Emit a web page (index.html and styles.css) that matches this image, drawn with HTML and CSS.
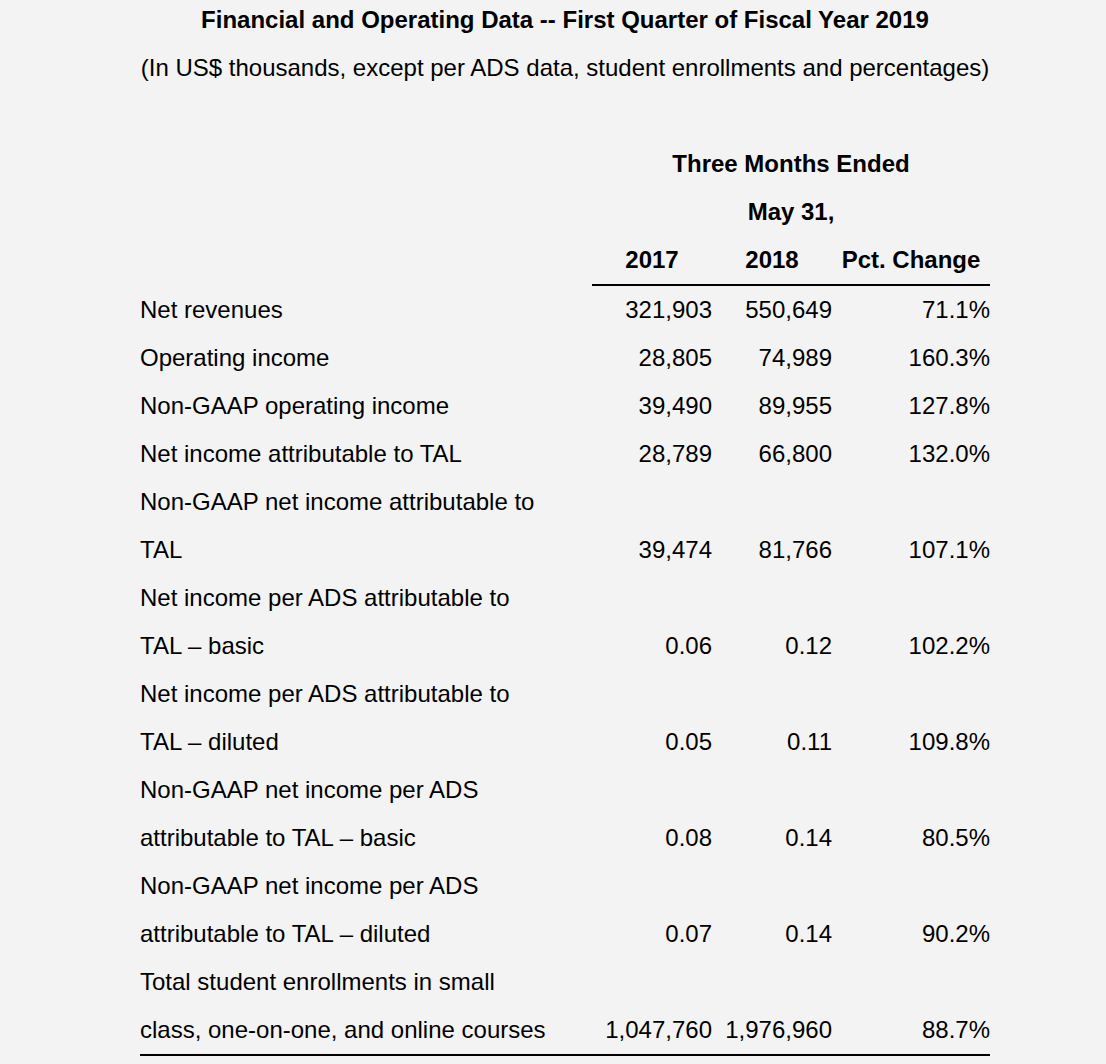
FILE: index.html
```html
<!DOCTYPE html>
<html lang="en">
<head>
<meta charset="utf-8">
<title>Financial and Operating Data</title>
<link rel="stylesheet" href="styles.css">
</head>
<body>
<div class="page">
  <h1 class="title">Financial and Operating Data -- First Quarter of Fiscal Year 2019</h1>
  <p class="subtitle">(In US$ thousands, except per ADS data, student enrollments and percentages)</p>
  <table class="data">
    <colgroup>
      <col class="c-label">
      <col class="c-num">
      <col class="c-num">
      <col class="c-pct">
    </colgroup>
    <thead>
      <tr><th></th><th colspan="3" class="hc">Three Months Ended</th></tr>
      <tr><th></th><th colspan="3" class="hc">May 31,</th></tr>
      <tr class="years"><th></th><th class="hc">2017</th><th class="hc">2018</th><th class="hc">Pct. Change</th></tr>
    </thead>
    <tbody>
      <tr><td class="lbl">Net revenues</td><td class="num">321,903</td><td class="num">550,649</td><td class="num">71.1%</td></tr>
      <tr><td class="lbl">Operating income</td><td class="num">28,805</td><td class="num">74,989</td><td class="num">160.3%</td></tr>
      <tr><td class="lbl">Non-GAAP operating income</td><td class="num">39,490</td><td class="num">89,955</td><td class="num">127.8%</td></tr>
      <tr><td class="lbl">Net income attributable to TAL</td><td class="num">28,789</td><td class="num">66,800</td><td class="num">132.0%</td></tr>
      <tr><td class="lbl">Non-GAAP net income attributable to TAL</td><td class="num">39,474</td><td class="num">81,766</td><td class="num">107.1%</td></tr>
      <tr><td class="lbl">Net income per ADS attributable to TAL – basic</td><td class="num">0.06</td><td class="num">0.12</td><td class="num">102.2%</td></tr>
      <tr><td class="lbl">Net income per ADS attributable to TAL – diluted</td><td class="num">0.05</td><td class="num">0.11</td><td class="num">109.8%</td></tr>
      <tr><td class="lbl">Non-GAAP net income per ADS attributable to TAL – basic</td><td class="num">0.08</td><td class="num">0.14</td><td class="num">80.5%</td></tr>
      <tr><td class="lbl">Non-GAAP net income per ADS attributable to TAL – diluted</td><td class="num">0.07</td><td class="num">0.14</td><td class="num">90.2%</td></tr>
      <tr class="last"><td class="lbl">Total student enrollments in small class, one-on-one, and online courses</td><td class="num">1,047,760</td><td class="num">1,976,960</td><td class="num">88.7%</td></tr>
    </tbody>
  </table>
</div>
</body>
</html>
```

FILE: styles.css
```css
html, body {
  margin: 0;
  padding: 0;
  background: #f3f3f3;
}

body {
  font-family: "Liberation Sans", Arial, Helvetica, sans-serif;
  color: #000;
}

.page {
  width: 850px;
  margin-left: 140px;
}

.title {
  margin: 0;
  font-size: 24px;
  font-weight: bold;
  line-height: 40px;
  text-align: center;
}

.subtitle {
  margin: 8px 0 0;
  font-size: 24px;
  line-height: 40px;
  text-align: center;
}

.data {
  width: 850px;
  margin-top: 52px;
  border-collapse: collapse;
  font-size: 24px;
  line-height: 48px;
  table-layout: fixed;
}

.c-label { width: 452px; }
.c-num { width: 120px; }
.c-pct { width: 158px; }

.data th,
.data td {
  padding: 0;
  vertical-align: bottom;
}

.data th {
  font-weight: bold;
}

.hc {
  text-align: center;
}

.years .hc {
  border-bottom: 2px solid #000;
}

.data .lbl {
  text-align: left;
  padding-right: 40px;
}

.num {
  text-align: right;
  white-space: nowrap;
}

.last td {
  border-bottom: 2px solid #000;
}
```
